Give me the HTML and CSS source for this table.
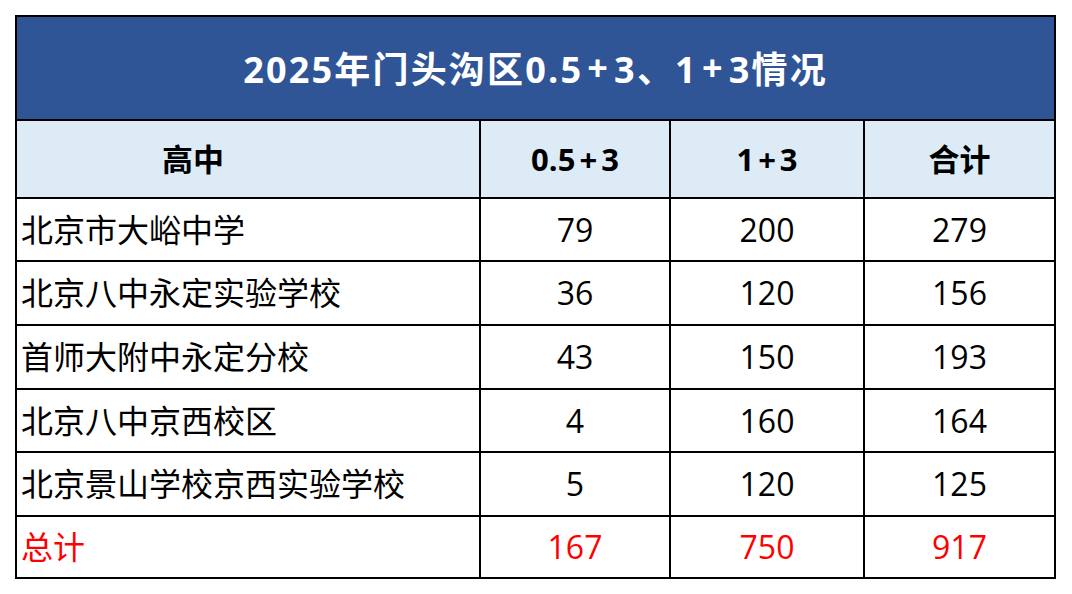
FILE: index.html
```html
<!DOCTYPE html>
<html lang="zh-CN">
<head>
<meta charset="utf-8">
<title>2025年门头沟区0.5+3、1+3情况</title>
<link rel="stylesheet" href="styles.css">
</head>
<body>
<div class="sheet">
  <div class="title">2025年门头沟区0.5<span class="plus">+</span>3、1<span class="plus">+</span>3情况</div>
  <div class="grid">
    <div class="cell head first">高中</div>
    <div class="cell head">0.5<span class="plus">+</span>3</div>
    <div class="cell head">1<span class="plus">+</span>3</div>
    <div class="cell head">合计</div>

    <div class="cell name">北京市大峪中学</div>
    <div class="cell num">79</div>
    <div class="cell num">200</div>
    <div class="cell num">279</div>

    <div class="cell name">北京八中永定实验学校</div>
    <div class="cell num">36</div>
    <div class="cell num">120</div>
    <div class="cell num">156</div>

    <div class="cell name">首师大附中永定分校</div>
    <div class="cell num">43</div>
    <div class="cell num">150</div>
    <div class="cell num">193</div>

    <div class="cell name">北京八中京西校区</div>
    <div class="cell num">4</div>
    <div class="cell num">160</div>
    <div class="cell num">164</div>

    <div class="cell name">北京景山学校京西实验学校</div>
    <div class="cell num">5</div>
    <div class="cell num">120</div>
    <div class="cell num">125</div>

    <div class="cell name total">总计</div>
    <div class="cell num total">167</div>
    <div class="cell num total">750</div>
    <div class="cell num total">917</div>
  </div>
</div>
</body>
</html>
```

FILE: styles.css
```css
html, body {
  margin: 0;
  padding: 0;
  background: #ffffff;
}

body {
  padding: 15px 0 0 15px;
  font-family: "Open Sans", "Noto Sans CJK SC", sans-serif;
  color: #000000;
}

.sheet {
  width: 1041px;
  box-sizing: border-box;
  border-left: 2px solid #000;
  border-top: 2px solid #000;
}

.title {
  height: 101px;
  border-right: 2px solid #000;
  border-bottom: 2px solid #000;
  background: #2F5597;
  color: #ffffff;
  font-weight: 700;
  font-size: 36px;
  letter-spacing: 2.2px;
  display: flex;
  align-items: center;
  justify-content: center;
  padding-bottom: 1px;
  box-sizing: content-box;
}

.plus {
  margin: 0 4px;
}

.grid {
  display: grid;
  grid-template-columns: 464px 190px 194px 191px;
  grid-template-rows: 78px 63px 64px 64px 63px 64px 62px;
}

.cell {
  border-right: 2px solid #000;
  border-bottom: 2px solid #000;
  display: flex;
  align-items: center;
  justify-content: center;
  font-size: 32px;
  line-height: 1;
}

.head {
  background: #DDEBF7;
  font-weight: 700;
  font-size: 31px;
}

.head.first {
  padding-right: 110px;
}

.name {
  justify-content: flex-start;
  padding-left: 4px;
}

.num {
  font-size: 32px;
}

.total {
  color: #FF0000;
}
```
